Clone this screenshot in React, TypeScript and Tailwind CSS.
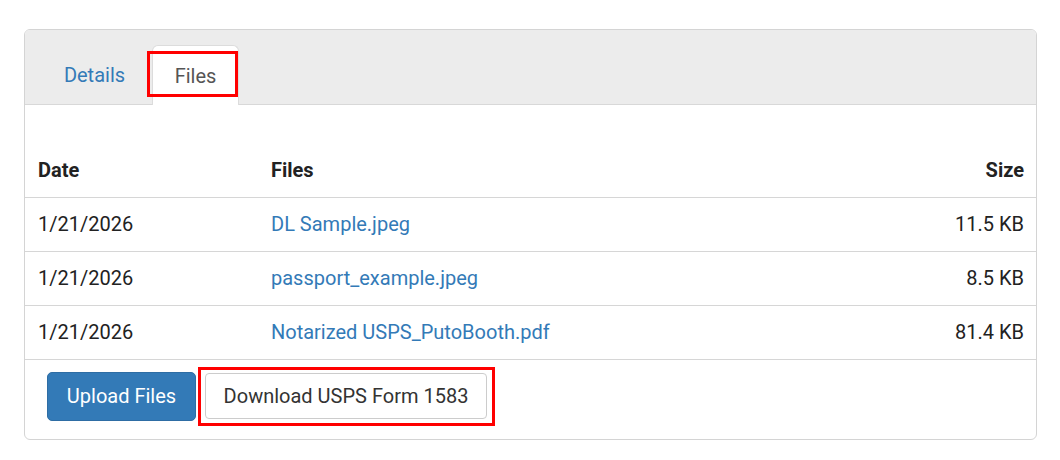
import React from 'react';

const rows = [
  { date: '1/21/2026', name: 'DL Sample.jpeg', size: '11.5 KB' },
  { date: '1/21/2026', name: 'passport_example.jpeg', size: '8.5 KB' },
  { date: '1/21/2026', name: 'Notarized USPS_PutoBooth.pdf', size: '81.4 KB' },
];

export default function App() {
  return (
    <div className="w-[1060px] h-[460px] bg-white pt-[29px] pl-[24px] font-['Roboto',_'Liberation_Sans',_sans-serif] text-[20px] text-[#222]">
      <div className="w-[1013px] h-[411px] border border-[#d4d4d4] rounded-[6px] overflow-hidden">
        {/* tab bar */}
        <div className="h-[75px] bg-[#ececec] border-b border-[#d8d8d8] flex items-end pl-[17px]">
          <div className="h-[59px] w-[105px] flex items-center justify-center text-[#337ab7] mr-[5px]">Details</div>
          <div className="relative h-[60px] w-[87px] -mb-px bg-white border border-b-0 border-[#dcdcdc] rounded-t-[6px] flex items-center justify-center text-[#555]">
            Files
            <span className="absolute left-[-6px] top-[5px] w-[91px] h-[46px] border-[3px] border-[#f00]" />
          </div>
        </div>

        {/* body */}
        <div className="pt-[38px]">
          <table className="w-full border-collapse">
            <thead>
              <tr className="h-[54px] border-b border-[#d6d6d6]">
                <th className="w-[233px] text-left font-bold pl-[13px]">Date</th>
                <th className="text-left font-bold pl-[13px]">Files</th>
                <th className="text-right font-bold pr-[12px]">Size</th>
              </tr>
            </thead>
            <tbody>
              {rows.map((r, i) => (
                <tr key={i} className="h-[54px] border-b border-[#d6d6d6]">
                  <td className="pl-[13px]">{r.date}</td>
                  <td className="pl-[13px] text-[#337ab7]">{r.name}</td>
                  <td className="text-right pr-[12px]">{r.size}</td>
                </tr>
              ))}
            </tbody>
          </table>

          <div className="flex items-center pl-[22px] pt-[12px] gap-[9px]">
            <button className="h-[49px] w-[149px] rounded-[5px] bg-[#337ab7] border border-[#2e6da4] text-white">
              Upload Files
            </button>
            <button className="relative h-[46px] w-[282px] rounded-[4px] bg-white border border-[#cccccc] text-[#333]">
              Download USPS Form 1583
              <span className="absolute left-[-8px] top-[-7px] w-[297px] h-[59px] border-[3px] border-[#f00]" />
            </button>
          </div>
        </div>
      </div>
    </div>
  );
}
